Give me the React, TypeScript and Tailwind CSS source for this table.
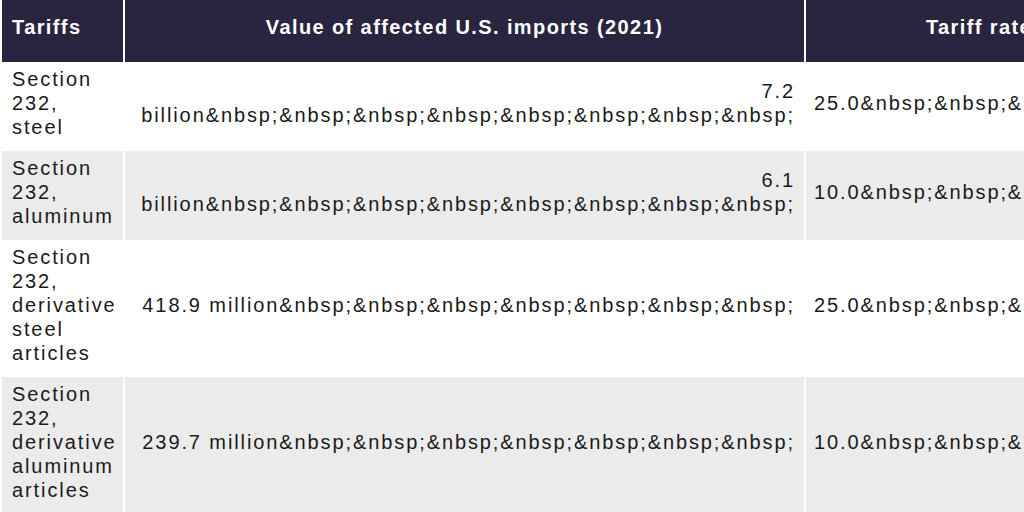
import React from "react";

const NB = "&nbsp;";

const rows = [
  { name: "Section 232, steel", value: "7.2 billion" + NB.repeat(8), rate: "25.0" + NB.repeat(4) },
  { name: "Section 232, aluminum", value: "6.1 billion" + NB.repeat(8), rate: "10.0" + NB.repeat(4) },
  { name: "Section 232, derivative steel articles", value: "418.9 million" + NB.repeat(7), rate: "25.0" + NB.repeat(4) },
  { name: "Section 232, derivative aluminum articles", value: "239.7 million" + NB.repeat(7), rate: "10.0" + NB.repeat(4) },
];

export default function App() {
  return (
    <div className="w-[1024px] h-[512px] overflow-hidden bg-white font-['Liberation_Sans',Arial,sans-serif]">
      <table className="table-fixed w-[1154px] border-separate border-spacing-x-[2px] border-spacing-y-0">
        <colgroup>
          <col className="w-[121px]" />
          <col className="w-[679px]" />
          <col className="w-[346px]" />
        </colgroup>
        <thead>
          <tr>
            <th className="bg-[#29243f] text-white text-left font-bold text-[20px] leading-[24px] tracking-[1.4px] pt-[15px] pb-[23px] pl-[10px] pr-[6px]">
              Tariffs
            </th>
            <th className="bg-[#29243f] text-white text-center font-bold text-[20px] leading-[24px] tracking-[1.4px] pt-[15px] pb-[23px] px-[10px]">
              Value of affected U.S. imports (2021)
            </th>
            <th className="bg-[#29243f] text-white text-center font-bold text-[20px] leading-[24px] tracking-[1.4px] pt-[15px] pb-[23px] px-[10px] whitespace-nowrap">
              Tariff rate
            </th>
          </tr>
        </thead>
        <tbody>
          {rows.map((r, i) => (
            <tr key={i} className={i % 2 === 1 ? "bg-[#ebebeb]" : "bg-white"}>
              <td className="align-middle text-left text-[20px] leading-[24px] tracking-[1.9px] text-[#1a1a1a] pt-[5px] pb-[12px] pl-[10px] pr-[7px]">
                {r.name}
              </td>
              <td className="align-middle text-right text-[20px] leading-[24px] tracking-[1.9px] text-[#1a1a1a] pt-[5px] pb-[12px] pl-[10px] pr-[9px]">
                {r.value}
              </td>
              <td className="align-middle text-left text-[20px] leading-[24px] tracking-[1.9px] text-[#1a1a1a] pt-[5px] pb-[12px] pl-[8px] pr-[10px] whitespace-nowrap">
                {r.rate}
              </td>
            </tr>
          ))}
        </tbody>
      </table>
    </div>
  );
}
